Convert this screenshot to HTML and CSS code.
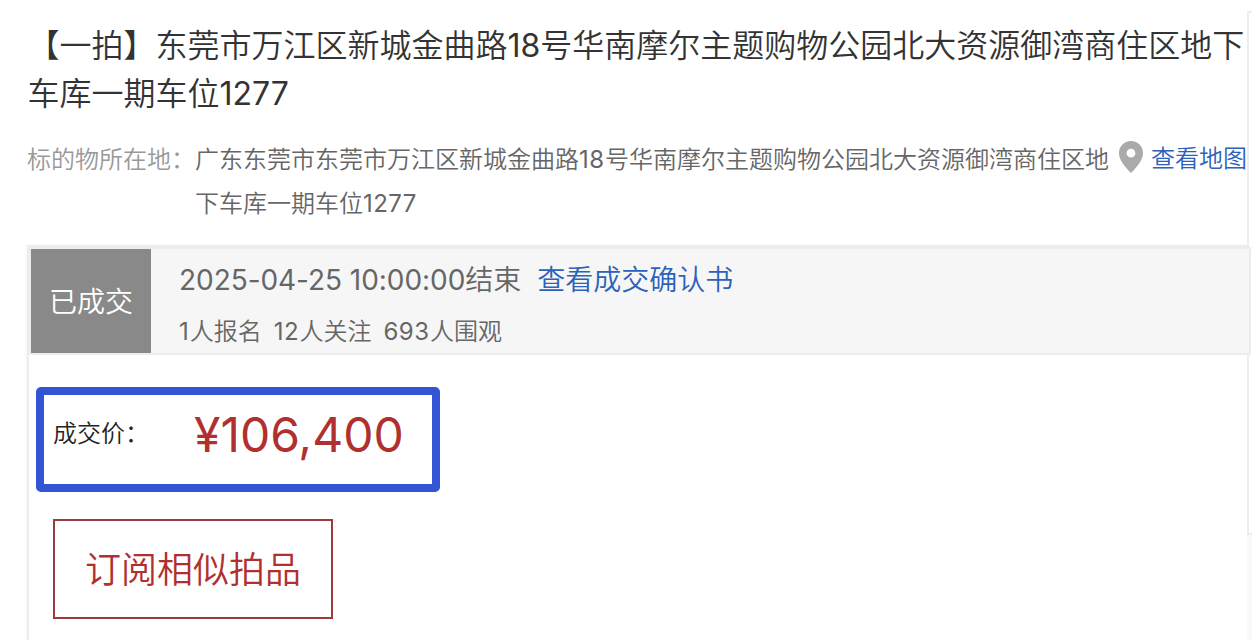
FILE: index.html
```
<!DOCTYPE html>
<html lang="zh-CN">
<head>
  <meta charset="UTF-8" />
  <meta name="viewport" content="width=device-width, initial-scale=1.0">
  <title>【一拍】东莞市万江区新城金曲路18号</title>
  <link rel="stylesheet" href="styles.css">
</head>
<body>

  <main class="detail">
    <h1 class="title">【一拍】东莞市万江区新城金曲路<span class="num">18</span>号华南摩尔主题购物公园北大资源御湾商住区地下<br>车库一期车位<span class="num">1277</span></h1>

    <div class="location">
      <span class="location-label">标的物所在地：</span>
      <span class="location-text">广东东莞市东莞市万江区新城金曲路<span class="num">18</span>号华南摩尔主题购物公园北大资源御湾商住区地<br>下车库一期车位<span class="num">1277</span></span>
      <svg class="pin" viewBox="0 0 24 32">
        <path fill-rule="evenodd" d="M12 0C5.2 0 0 5.2 0 12c0 6.500 5 13 12 20 7-7 12-13.500 12-20C24 5.200 18.800 0 12 0zm0 7.800a4.400 4.400 0 1 1 0 8.800 4.400 4.400 0 0 1 0-8.800z"/>
      </svg>
      <a class="map-link" href="#">查看地图</a>
    </div>

    <section class="auction">
      <div class="status-bar">
        <div class="status">已成交</div>
        <div class="status-info">
          <div class="end-time"><span class="time">2025-04-25 10:00:00</span>结束<a class="confirm-link" href="#">查看成交确认书</a></div>
          <div class="counts">
            <span><span class="num">1</span>人报名</span>
            <span><span class="num">12</span>人关注</span>
            <span><span class="num">693</span>人围观</span>
          </div>
        </div>
      </div>

      <div class="price-box">
        <span class="price-label">成交价：</span>
        <span class="price">¥106,400</span>
      </div>

      <button class="subscribe-btn">订阅相似拍品</button>
    </section>
  </main>

  <aside class="side">
    <div class="side-panel"></div>
  </aside>

</body>
</html>
```
FILE: styles.css
```
* {
  margin: 0;
  padding: 0;
  box-sizing: border-box;
}

body {
  display: flex;
  width: 1252px;
  height: 640px;
  overflow: hidden;
  background-color: #fff;
  color: #333;
  font-family: Inter, "Noto Sans CJK SC", sans-serif;
  font-weight: 350;
}

a {
  color: #2b62bb;
  text-decoration: none;
}

.num {
  padding-right: 0.6px;
  font-weight: 380;
  letter-spacing: 0.4px;
}

.detail {
  width: 1247px;
  flex-shrink: 0;
  padding: 22px 0 0 27px;
  display: flex;
  flex-direction: column;
}

.title {
  padding-left: 0.5px;
  font-size: 32px;
  font-weight: 350;
  line-height: 48px;
  white-space: nowrap;
}

.title .num {
  padding-right: 0;
  letter-spacing: 0;
}

.location {
  display: flex;
  height: 127px;
  padding-top: 20px;
  font-size: 24px;
  line-height: 44px;
  white-space: nowrap;
}

.location-label {
  width: 168px;
  flex-shrink: 0;
  color: #999;
}

.location-text {
  width: 915px;
  flex-shrink: 0;
  color: #666;
}

.pin {
  width: 24px;
  height: 32px;
  margin: 3px 8px 0 9px;
  flex-shrink: 0;
  fill: #aaa;
}

.map-link {
  margin-top: -1px;
}

.auction {
  flex: 1;
  border: solid #ededed;
  border-width: 2px 0 0 2px;
  box-shadow: -1px 0 3px rgba(0, 0, 0, 0.04);
}

/* runs a few pixels over the side column */
.status-bar {
  position: relative;
  z-index: 1;
  display: flex;
  width: 1222px;
  height: 108px;
  border: 2px solid #ededed;
  background-color: #f6f6f6;
}

.status {
  width: 120px;
  padding-top: 1px;
  background-color: #898989;
  color: #fff;
  font-size: 28px;
  line-height: 104px;
  text-align: center;
}

.status-info {
  padding: 9px 0 0 28px;
  color: #666;
}

.end-time {
  font-size: 28px;
  line-height: 44px;
}

.time {
  font-weight: 380;
  letter-spacing: -0.05px;
}

.confirm-link {
  margin-left: 16px;
}

.counts {
  display: flex;
  gap: 12px;
  padding-top: 8px;
  font-size: 24px;
  line-height: 44px;
}

.price-box {
  display: flex;
  width: 404px;
  height: 105px;
  margin: 32px 0 0 7px;
  padding-left: 9px;
  border: 8px solid #3155d3;
  border-radius: 5px;
}

.price-label {
  width: 141px;
  color: #222;
  font-size: 24px;
  line-height: 78px;
}

.price {
  color: #b0302f;
  font-size: 48px;
  font-weight: 385;
  line-height: 80px;
}

.subscribe-btn {
  display: block;
  width: 280px;
  height: 100px;
  margin: 27px 0 0 24px;
  padding-bottom: 4px;
  border: 2px solid #9c3a3c;
  background-color: #fff;
  color: #b0302f;
  font-family: inherit;
  font-size: 36px;
  font-weight: 350;
}

.side {
  flex: 1;
  padding-top: 11px;
  background: linear-gradient(#fff 535px, #fafafa 535px);
}

.side-panel {
  height: 524px;
  border: solid #ededed;
  border-width: 2px 0 2px 2px;
  background-color: #fff;
}
```
